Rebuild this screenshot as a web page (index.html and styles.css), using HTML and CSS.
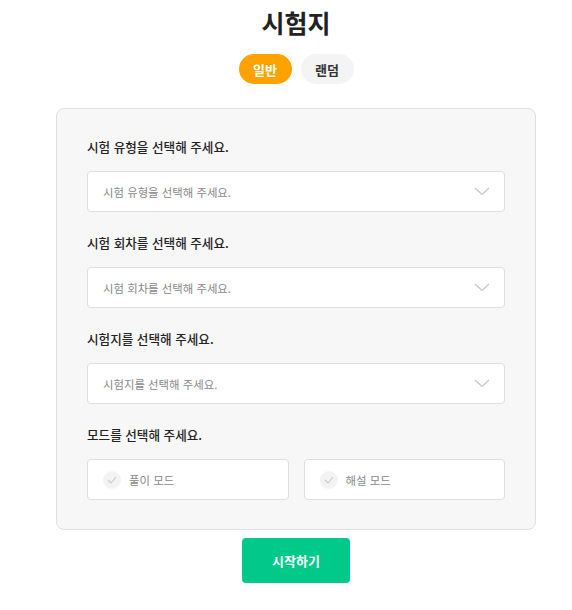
FILE: index.html
```html
<!DOCTYPE html>
<html lang="ko">
<head>
    <meta charset="UTF-8">
    <meta name="viewport" content="width=device-width, initial-scale=1.0">
    <title>시험지</title>
    <link rel="stylesheet" href="styles.css">
</head>
<body>
    <h1 class="page-title">시험지</h1>

    <div class="tabs">
        <button class="tab active">일반</button>
        <button class="tab">랜덤</button>
    </div>

    <div class="exam-box">
        <!-- 시험 유형 -->
        <div class="field">
            <div class="field-label">시험 유형을 선택해 주세요.</div>
            <div class="select">
                <span>시험 유형을 선택해 주세요.</span>
                <svg class="chevron" width="16" height="9" viewBox="0 0 16 9"><path d="M1 1l7 6.5L15 1" fill="none" stroke="#c4c4c4" stroke-width="1.2"/></svg>
            </div>
        </div>

        <!-- 시험 회차 -->
        <div class="field">
            <div class="field-label">시험 회차를 선택해 주세요.</div>
            <div class="select">
                <span>시험 회차를 선택해 주세요.</span>
                <svg class="chevron" width="16" height="9" viewBox="0 0 16 9"><path d="M1 1l7 6.5L15 1" fill="none" stroke="#c4c4c4" stroke-width="1.2"/></svg>
            </div>
        </div>

        <!-- 시험지 -->
        <div class="field">
            <div class="field-label">시험지를 선택해 주세요.</div>
            <div class="select">
                <span>시험지를 선택해 주세요.</span>
                <svg class="chevron" width="16" height="9" viewBox="0 0 16 9"><path d="M1 1l7 6.5L15 1" fill="none" stroke="#c4c4c4" stroke-width="1.2"/></svg>
            </div>
        </div>

        <!-- 모드 -->
        <div class="field">
            <div class="field-label">모드를 선택해 주세요.</div>
            <div class="mode-grid">
                <div class="mode">
                    <span class="check"><svg width="10" height="8" viewBox="0 0 10 8"><path d="M1 4l3 3 5-6" fill="none" stroke="#c8c8c8" stroke-width="1.1"/></svg></span>
                    풀이 모드
                </div>
                <div class="mode">
                    <span class="check"><svg width="10" height="8" viewBox="0 0 10 8"><path d="M1 4l3 3 5-6" fill="none" stroke="#c8c8c8" stroke-width="1.1"/></svg></span>
                    해설 모드
                </div>
            </div>
        </div>
    </div>

    <div class="actions">
        <button class="start-btn">시작하기</button>
    </div>
</body>
</html>
```

FILE: styles.css
```css
* {
    box-sizing: border-box;
}

body {
    font-family: "Noto Sans CJK KR", "Noto Sans", sans-serif;
    margin: 0;
    padding: 0 0 0 20px;
    background-color: #fff;
    color: #222;
}

.page-title {
    text-align: center;
    font-size: 25px;
    font-weight: 700;
    line-height: 36px;
    margin: 4px 0 14px;
}

.tabs {
    display: flex;
    justify-content: center;
    gap: 9px;
}

.tab {
    font-family: inherit;
    border: none;
    border-radius: 15px;
    height: 30px;
    width: 53px;
    font-size: 13px;
    font-weight: 700;
    background-color: #f4f4f4;
    color: #333;
    padding: 0;
}

.tab.active {
    background-color: #ffa200;
    color: #fff;
}

.exam-box {
    width: 480px;
    margin: 24px auto 0;
    padding: 29px 30px 29px;
    background-color: #f7f7f7;
    border: 1px solid #e0e0e0;
    border-radius: 8px;
    display: flex;
    flex-direction: column;
    gap: 22px;
}

.field-label {
    font-size: 12.6px;
    font-weight: 500;
    line-height: 18px;
    margin-bottom: 15px;
    color: #222;
}

.select {
    display: flex;
    align-items: center;
    justify-content: space-between;
    height: 41px;
    padding: 0 14px 0 15px;
    background-color: #fff;
    border: 1px solid #dedede;
    border-radius: 4px;
    font-size: 11.4px;
    color: #888;
}

.mode-grid {
    display: grid;
    grid-template-columns: 1fr 1fr;
    gap: 15px;
}

.mode {
    display: flex;
    align-items: center;
    gap: 8px;
    height: 41px;
    padding: 0 15px;
    background-color: #fff;
    border: 1px solid #dedede;
    border-radius: 4px;
    font-size: 11.4px;
    color: #888;
}

.check {
    width: 18px;
    height: 18px;
    border-radius: 50%;
    background-color: #f3f3f3;
    display: flex;
    align-items: center;
    justify-content: center;
}

.actions {
    display: flex;
    justify-content: center;
    margin-top: 8px;
}

.start-btn {
    font-family: inherit;
    width: 108px;
    height: 45px;
    border: none;
    border-radius: 4px;
    background-color: #00c98a;
    color: #fff;
    font-size: 13px;
    font-weight: 700;
}
```
